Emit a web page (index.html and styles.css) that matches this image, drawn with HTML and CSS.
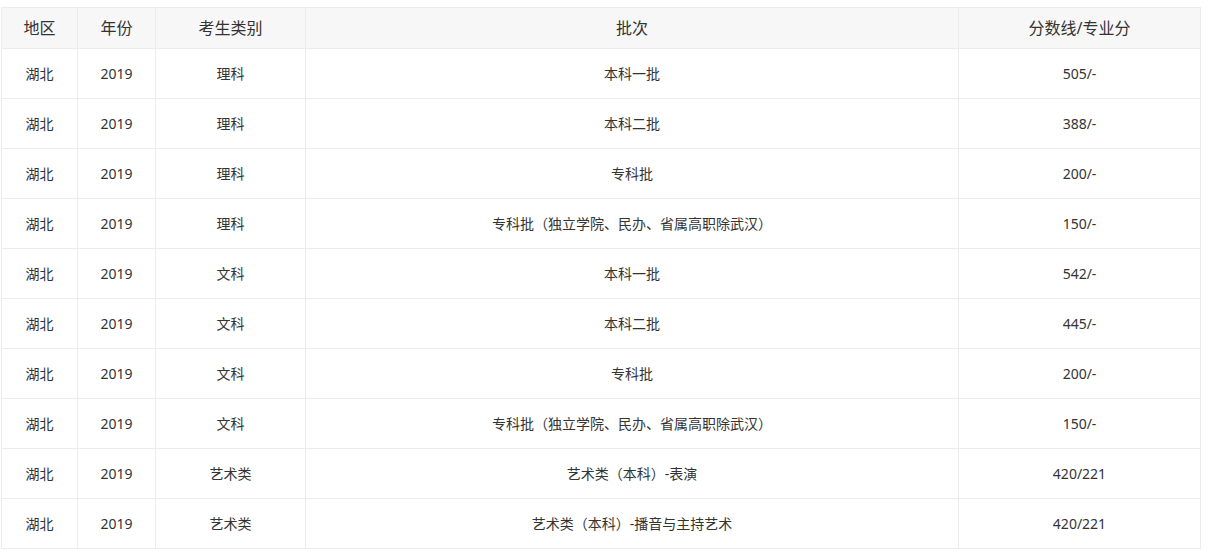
FILE: index.html
```html
<!DOCTYPE html>
<html lang="zh-CN">
<head>
<meta charset="utf-8">
<title>分数线</title>
<link rel="stylesheet" href="styles.css">
</head>
<body>
<div class="wrap">
<table class="score-table">
<colgroup>
<col class="c1"><col class="c2"><col class="c3"><col class="c4"><col class="c5">
</colgroup>
<thead>
<tr><th>地区</th><th>年份</th><th>考生类别</th><th>批次</th><th>分数线/专业分</th></tr>
</thead>
<tbody>
<tr><td>湖北</td><td>2019</td><td>理科</td><td>本科一批</td><td>505/-</td></tr>
<tr><td>湖北</td><td>2019</td><td>理科</td><td>本科二批</td><td>388/-</td></tr>
<tr><td>湖北</td><td>2019</td><td>理科</td><td>专科批</td><td>200/-</td></tr>
<tr><td>湖北</td><td>2019</td><td>理科</td><td>专科批（独立学院、民办、省属高职除武汉）</td><td>150/-</td></tr>
<tr><td>湖北</td><td>2019</td><td>文科</td><td>本科一批</td><td>542/-</td></tr>
<tr><td>湖北</td><td>2019</td><td>文科</td><td>本科二批</td><td>445/-</td></tr>
<tr><td>湖北</td><td>2019</td><td>文科</td><td>专科批</td><td>200/-</td></tr>
<tr><td>湖北</td><td>2019</td><td>文科</td><td>专科批（独立学院、民办、省属高职除武汉）</td><td>150/-</td></tr>
<tr><td>湖北</td><td>2019</td><td>艺术类</td><td>艺术类（本科）-表演</td><td>420/221</td></tr>
<tr><td>湖北</td><td>2019</td><td>艺术类</td><td>艺术类（本科）-播音与主持艺术</td><td>420/221</td></tr>
</tbody>
</table>
</div>
</body>
</html>
```

FILE: styles.css
```css
html, body {
  margin: 0;
  padding: 0;
  background: #fff;
}
.wrap {
  padding: 7px 0 0 1px;
}
.score-table {
  border-collapse: collapse;
  table-layout: fixed;
  width: 1199px;
  font-family: "Noto Sans", "Noto Sans CJK SC", sans-serif;
  color: #333;
}
.c1 { width: 76px; }
.c2 { width: 78px; }
.c3 { width: 150px; }
.c4 { width: 653px; }
.c5 { width: 242px; }
.score-table th,
.score-table td {
  border: 1px solid #ececec;
  text-align: center;
  padding: 0;
  line-height: 20px;
}
.score-table th {
  height: 40px;
  background: #f7f7f7;
  font-weight: normal;
  font-size: 16px;
}
.score-table td {
  height: 49px;
  font-size: 14px;
}
```
